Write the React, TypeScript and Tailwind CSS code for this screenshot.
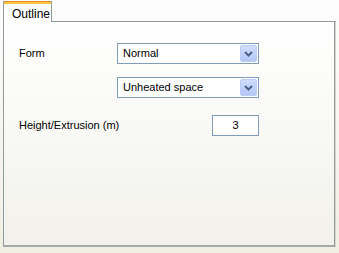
import React from "react";

function Chevron() {
  return (
    <svg width="9" height="6" viewBox="0 0 9 6">
      <path d="M1 1 L4.5 4.5 L8 1" fill="none" stroke="#4d6185" strokeWidth="2" />
    </svg>
  );
}

function Dropdown({ value }: { value: string }) {
  return (
    <div className="flex h-[21px] w-[142px] items-center border border-[#7f9db9] bg-white p-px">
      <span className="flex-1 pl-[4px] leading-none">{value}</span>
      <div className="flex h-[17px] w-[17px] items-center justify-center rounded-[2px] border border-[#bccbf3] bg-gradient-to-b from-[#cfdcfd] to-[#b4c8f6]">
        <Chevron />
      </div>
    </div>
  );
}

export default function App() {
  return (
    <div
      className="h-[253px] w-[339px] bg-gradient-to-b from-[#fdfdfd] to-[#f1eee3] pl-[3px] pt-[1px] text-[11px] text-black"
      style={{ fontFamily: '"Liberation Sans", Arial, sans-serif' }}
    >
      {/* tab strip */}
      <div className="flex h-[21px] w-[333px]">
        <div className="flex w-[49px] flex-col border-x border-[#919b9c] bg-white">
          <div className="h-px bg-[#e68b2c]" />
          <div className="h-[2px] bg-[#ffc73c]" />
          <div className="pl-[8px] pt-[4px] text-[12px] leading-none">Outline</div>
        </div>
        <div className="flex-1 border-b border-[#919b9c]" />
      </div>

      {/* page */}
      <div className="flex h-[225px] w-[333px]">
        <div className="flex flex-1 flex-col border-b-2 border-l border-[#919b9c] border-b-[#a3aaab] bg-gradient-to-b from-white to-[#f2f1eb] pl-[15px] pt-[21px]">
          <div className="flex w-[240px] items-center">
            <span className="w-[98px] shrink-0">Form</span>
            <Dropdown value="Normal" />
          </div>
          <div className="mt-[13px] flex w-[240px] items-center">
            <span className="w-[98px] shrink-0" />
            <Dropdown value="Unheated space" />
          </div>
          <div className="mt-[17px] flex w-[240px] items-center justify-between">
            <span className="whitespace-nowrap">Height/Extrusion (m)</span>
            <div className="flex h-[21px] w-[47px] items-center justify-center border border-[#7f9db9] bg-white">
              3
            </div>
          </div>
        </div>
        <div className="w-px bg-[#919b9c]" />
        <div className="w-px bg-[#d6d5c9]" />
      </div>
    </div>
  );
}
